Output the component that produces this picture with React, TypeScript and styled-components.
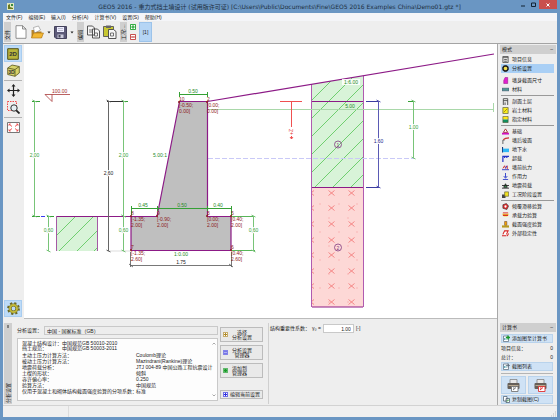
import React from "react";
import styled, { createGlobalStyle } from "styled-components";

const sans = '"Liberation Sans", "Noto Sans CJK SC", sans-serif';

const GlobalStyle = createGlobalStyle`
  * { box-sizing: border-box; }
  body { margin: 0; background: #6a96c3; font: 5px/7px ${sans}; color: #222; }
  button, input { font: inherit; color: inherit; margin: 0; padding: 0; }
  svg { display: block; flex: none; }
`;

const Window = styled.div`
  min-height: 100vh;
  display: flex;
  flex-direction: column;
  padding: 0 3px 3px;
  background: #6a96c3;
`;

const TitleBar = styled.header`
  display: flex;
  height: 13px;
  align-items: center;
  padding-left: 4px;
`;

const Title = styled.h1`
  flex: 1;
  margin: 0;
  padding-left: 28px;
  font: 400 6px/12px "DejaVu Sans", "Noto Sans CJK SC", sans-serif;
  text-align: center;
  white-space: nowrap;
  color: #1d2f42;
`;

const WindowButton = styled.button<{ $close?: boolean }>`
  display: grid;
  place-items: center;
  align-self: flex-start;
  width: ${(p) => (p.$close ? 18 : 11)}px;
  height: 9px;
  border: 0;
  background: ${(p) => (p.$close ? "#c9504e" : "transparent")};
`;

const MenuBar = styled.nav`
  display: flex;
  height: 8px;
  gap: 6px;
  padding: 0 3px;
  background: #f4f5f8;
`;

const MenuItem = styled.button`
  border: 0;
  background: none;
  line-height: 8px;
  white-space: nowrap;
`;

const Toolbar = styled.div`
  display: flex;
  align-items: center;
  gap: 3px;
  height: 22px;
  padding: 0 1px;
  background: #eee;
`;

const ToolLabel = styled.span`
  writing-mode: vertical-rl;
  text-orientation: sideways;
  transform: rotate(180deg);
  height: 20px;
  width: 7px;
  padding-top: 2px;
  line-height: 7px;
  background: #cfcfcf;
`;

const ToolButton = styled.button<{ $on?: boolean }>`
  display: grid;
  place-items: center;
  min-width: 13px;
  height: 20px;
  border: ${(p) => (p.$on ? "1px solid #9cc3ea" : "0")};
  background: ${(p) => (p.$on ? "#b5d5f5" : "none")};
`;

const Arrow = styled.button`
  width: 4px;
  height: 12px;
  border: 0;
  background: none;
  display: grid;
  place-items: center;
`;

const StageButtons = styled.div`
  display: grid;
  gap: 4px;
`;

const StageButton = styled.button`
  border: 0;
  background: none;
`;

const Body = styled.div`
  flex: 1;
  display: grid;
  grid-template-columns: minmax(0, 1fr) 60px;
  background: #eee;
  border-top: 1px solid #a4a4a4;
`;

const Work = styled.div`
  display: flex;
  flex-direction: column;
  min-width: 0;
`;

const Stage = styled.div`
  flex: 1;
  display: grid;
  grid-template-columns: 21px minmax(0, 1fr);
`;

const ViewTools = styled.div`
  display: flex;
  flex-direction: column;
  align-items: center;
  padding: 1px 2px 2px 1px;
`;

const ViewButton = styled.button<{ $on?: boolean; $last?: boolean }>`
  display: grid;
  place-items: center;
  width: 18px;
  height: 17px;
  margin-top: ${(p) => (p.$last ? "auto" : "0")};
  border: 1px solid ${(p) => (p.$on ? "#a9cdf0" : "transparent")};
  background: ${(p) => (p.$on ? "#bddbf8" : "none")};
`;

const Rule = styled.hr`
  width: 100%;
  height: 1px;
  margin: 1px 0;
  border: 0;
  background: #b4b4b4;
`;

const Canvas = styled.main`
  background: #fff;
  border-bottom: 1px solid #bbb;
  svg { width: 100%; height: auto; }
`;

const BottomPanel = styled.section`
  display: flex;
  gap: 5px;
  height: 86px;
  padding: 4px 1px 1px;
`;

const Tab = styled.div`
  display: flex;
  flex-direction: column;
  justify-content: space-between;
  align-items: center;
  width: 8px;
  padding: 2px 0 1px;
  background: #cfcfcf;
  span {
    writing-mode: vertical-rl;
    text-orientation: sideways;
    transform: rotate(180deg);
    line-height: 8px;
  }
`;

const Settings = styled.div`
  display: flex;
  flex-direction: column;
  gap: 3px;
  width: 201px;
  padding: 3px 0;
`;

const Field = styled.label`
  display: flex;
  align-items: center;
  gap: 2px;
  white-space: nowrap;
`;

const TextInput = styled.input<{ $small?: boolean }>`
  flex: ${(p) => (p.$small ? "none" : "1")};
  width: ${(p) => (p.$small ? "31px" : "auto")};
  min-width: 0;
  height: 9px;
  padding: 0 2px;
  border: 1px solid #c9c9c9;
  background: ${(p) => (p.$small ? "#fff" : "#ededed")};
  text-align: ${(p) => (p.$small ? "right" : "left")};
`;

const Report = styled.div`
  flex: 1;
  display: flex;
  justify-content: space-between;
  padding: 2px 2px 2px 4px;
  border: 1px solid #c9c9c9;
  background: #fdfdfd;
`;

const ReportText = styled.dl`
  margin: 0;
  white-space: nowrap;
`;

const ReportRow = styled.div<{ $wide?: boolean; $gap?: boolean }>`
  display: grid;
  grid-template-columns: ${(p) => (p.$wide ? 114 : 40)}px auto;
  line-height: ${(p) => (p.$wide ? 6 : 5)}px;
  height: ${(p) => (p.$wide ? 6 : 5)}px;
  margin-bottom: ${(p) => (p.$gap ? 1 : 0)}px;
  dd { margin: 0; }
`;

const ScrollEnds = styled.div`
  display: flex;
  flex-direction: column;
  justify-content: space-between;
  padding: 1px 0;
`;

const ButtonColumn = styled.div`
  display: flex;
  flex-direction: column;
  gap: 3px;
  width: 43px;
  margin-left: -3px;
  padding: 4px 0 5px;
`;

const PushButton = styled.button<{ $single?: boolean }>`
  display: flex;
  align-items: center;
  gap: ${(p) => (p.$single ? 2 : 4)}px;
  height: ${(p) => (p.$single ? 9 : 15)}px;
  margin-top: ${(p) => (p.$single ? "auto" : "0")};
  padding: 0 2px;
  border: 1px solid #bcbcbc;
  background: #e9e9e9;
  line-height: 5px;
  white-space: pre;
`;

const Factor = styled.div`
  padding: 1px;
  border-left: 1px solid #cfcfcf;
`;

const Side = styled.aside`
  display: flex;
  flex-direction: column;
  justify-content: space-between;
  padding: 1px 1px 1px 2px;
  border-left: 1px solid #a8a8a8;
`;

const SideHeader = styled.h2`
  display: flex;
  justify-content: space-between;
  align-items: center;
  height: 9px;
  margin: 0;
  padding: 0 3px 0 2px;
  background: #cfcfcf;
  font: inherit;
`;

const ModeList = styled.div`
  display: flex;
  flex-direction: column;
  padding: 1px 2px 0 1px;
`;

const ModeButton = styled.button<{ $on?: boolean }>`
  display: flex;
  align-items: center;
  gap: 3px;
  height: 9px;
  padding: 0 1px;
  border: 0;
  background: ${(p) => (p.$on ? "#a9cff5" : "none")};
  white-space: nowrap;
`;

const Separator = styled(Rule)<{ $clear?: boolean }>`
  background: ${(p) => (p.$clear ? "transparent" : "#999")};
`;

const Output = styled.div`
  display: grid;
  gap: 1px;
  padding: 2px 3px 0 1px;
`;

const BlueButton = styled.button<{ $tall?: boolean }>`
  display: flex;
  align-items: center;
  justify-content: ${(p) => (p.$tall ? "center" : "flex-start")};
  gap: 2px;
  height: ${(p) => (p.$tall ? 18 : 9)}px;
  padding: 0 1px;
  border: 1px solid #b9d3ec;
  background: #cfe2f5;
  white-space: nowrap;
`;

const CountRow = styled.div`
  display: flex;
  justify-content: space-between;
  height: 8px;
  line-height: 8px;
`;

const PrintRow = styled.div`
  display: grid;
  grid-template-columns: 1fr 1fr;
  gap: 2px;
`;

const StatusBar = styled.footer`
  display: flex;
  justify-content: space-between;
  align-items: flex-end;
  height: 12px;
  border-top: 1px solid #d2d2d2;
  background: #f0f0f0;
`;

const StatusCell = styled.div`
  width: 66px;
  height: 100%;
  border-right: 1px solid #dcdcdc;
`;

/* ---------- icons ---------- */

const modeShapes: Record<string, React.ReactNode> = {
  doc: <><path d="M1 .5h6v7H1z" fill="#ddd" stroke="#555" /><path d="M1 1.5h6M2.5 4h3M2.5 6h3" stroke="#555" /></>,
  gear: <><circle cx="4" cy="4" r="2.6" fill="none" stroke="#222" strokeWidth="2" /><circle cx="4" cy="4" r="3.4" fill="none" stroke="#222" strokeDasharray="1.4 1.2" /><circle cx="4" cy="4" r="2" fill="#f4e04a" /></>,
  wall: <path d="M3.5 .5h3v7H2V4z" fill="#e020d0" stroke="#901080" strokeWidth=".6" />,
  mat: <path d="M0 2.5h8v3H0z" fill="#4f9a93" stroke="#346" strokeWidth=".6" />,
  profile: <path d="M1.5 8V.8h5V8M1.5 3h5M3.5 5v3" fill="none" stroke="#444" />,
  soil: <><path d="M1 .5h6v7H1z" fill="#f7ee20" stroke="#775" /><path d="M2 6l4-4" stroke="#a80" /></>,
  assign: <><path d="M1 .5h6V4H1z" fill="#ffe818" /><path d="M1 4h6v3.5H1z" fill="#109060" /><path d="M1 .5h6v7H1z" fill="none" stroke="#553" strokeWidth=".7" /></>,
  base: <><path d="M1.5 5L4 1l2.5 4z" fill="#fff" stroke="#922" /><path d="M0 5.5h8v2H0z" fill="#d010c0" /></>,
  terrain: <><path d="M1 8V3.5h2" stroke="#555" fill="none" /><path d="M1.5 3Q3.5 1 8 1" stroke="#d03030" strokeWidth="1.5" fill="none" /></>,
  water: <><path d="M.5 1v6.5" stroke="#123a80" strokeWidth="1.5" /><path d="M1 3h7v4H1z" fill="#2fb8f5" /></>,
  load: <path d="M1 8V1.5h7M3 1.5v2M5.5 1.5v2" stroke="#2433c8" strokeWidth="1.4" fill="none" />,
  front: <><path d="M0 6.5h8" stroke="#2433c8" /><path d="M1 5l2-3 1 3M6 2v4" stroke="#c22" fill="none" /><path d="M4 5l1.5-3" stroke="#22c" /></>,
  force: <path d="M4 0v5M2 3.5L4 6l2-2.5M1 7.5h6" stroke="#2433c8" fill="none" />,
  quake: <><path d="M0 7h8M2 6l2-4 2 4z" stroke="#222" fill="#3a5" /><path d="M0 4h8" stroke="#222" /></>,
  stages: <><path d="M0 4h4v4H0z" fill="#444" /><path d="M3 1h4.5v5H3z" fill="#f0e020" stroke="#553" strokeWidth=".7" /></>,
  slip: <><path d="M1 2l4-1.5 2.5 3-2 4L1 6z" fill="#e02828" stroke="#333" strokeWidth=".7" /><circle cx="4" cy="4" r="1.3" fill="#fff" /></>,
  bearing: <><path d="M0 2h8L6 5H2z" fill="#f2e430" /><path d="M1 3h6v1.5H1z" fill="#d82222" /><path d="M1 1h6" stroke="#d82222" /></>,
  section: <><path d="M3 .5h2.5V5H3z" fill="#fa0" stroke="#533" strokeWidth=".6" /><path d="M0 5h8v2.5H0z" fill="#b89a20" /></>,
  stability: <path d="M0 6.5h5M1 5L3 1h4L5 5M6 7l1.5-3" stroke="#d82222" strokeWidth="1.2" fill="#fff" />,
};

const ModeIcon = ({ name }: { name: string }) => (
  <svg width="7" height="7" viewBox="0 0 8 8" aria-hidden>{modeShapes[name]}</svg>
);

const Square = ({ color, mark, size = 5 }: { color: string; mark: string; size?: number }) => (
  <svg width={size} height={size} viewBox="0 0 10 10" aria-hidden>
    <path d="M.8.8h8.4v8.4H.8z" fill="#fff" stroke={color} strokeWidth="1.5" />
    <path d={mark} stroke={color} strokeWidth="2" fill="none" />
  </svg>
);

const PLUS = "M5 2v6M2 5h6";
const LINES = "M2 3.5h6M2 6.5h6";
const DISC = "M3 3h4v4H3zM4 5h2";

const Dropper = () => (
  <svg width="4" height="3" viewBox="0 0 4 3" aria-hidden><path d="M.5.5h3L2 2.5z" fill="#222" /></svg>
);

const Printer = ({ accent }: { accent: string }) => (
  <svg width="13" height="13" viewBox="0 0 13 13" aria-hidden>
    <path d="M3 .5h7V5H3z" fill="#e8e8e8" stroke="#777" strokeWidth=".7" />
    <rect x=".5" y="4" width="12" height="6" rx="1" fill="#665f58" />
    <path d="M1.5 6.5h10" stroke="#b9a98f" />
    <path d="M4.5 7.5H11v5H4.5z" fill="#fff" stroke={accent} strokeWidth=".9" />
    <path d="M6 11l3-2.5M6 9h1.5" stroke={accent} />
  </svg>
);

const ChartAdd = ({ green }: { green?: boolean }) => (
  <svg width="7" height="7" viewBox="0 0 7 7" aria-hidden>
    <path d="M.5 1h5v5.5h-5z" fill="#fff" stroke="#567" strokeWidth=".7" />
    <path d="M1.5 5V3M3 5V2.5" stroke="#49a" strokeWidth=".8" />
    <path d="M5 .5v4M3 2.5h4" stroke={green ? "#189a28" : "#567"} strokeWidth={green ? 1.3 : 0.7} />
  </svg>
);

const CopyPages = () => (
  <svg width="7" height="7" viewBox="0 0 7 7" aria-hidden>
    <path d="M.5.5H4V5H.5zM3 2.5h3.5v4H3z" fill="#fff" stroke="#456" strokeWidth=".7" />
    <path d="M4 5.5l2-2" stroke="#189a28" />
  </svg>
);

/* ---------- drawing ---------- */

const GREEN = "#35a035";
const PURPLE = "#8c1a86";
const DARKRED = "#8e1c1c";

type DimProps = { x: number; from: number; to: number; label: string; at: number; color: string; line?: string };

const VDim = ({ x, from, to, label, at, color, line }: DimProps) => (
  <g>
    <path d={`M${x} ${from}V${to}M${x - 2} ${from - 1}l4 2M${x - 2} ${to - 1}l4 2`} stroke={line || color} />
    <text x={x} y={at + 2} fill={color} textAnchor="middle" className="halo">{label}</text>
  </g>
);

const PointLabel = ({ x, y, n, a, b }: { x: number; y: number; n: string; a: string; b: string }) => (
  <g fill={DARKRED}>
    <circle cx={x} cy={y} r="1" />
    <text x={x} y={y - 1}>{n}</text>
    <text x={x} y={y + 5}>{a}</text>
    <text x={x} y={y + 11}>{b}</text>
  </g>
);

const hatch = (sums: number[]) => sums.map((s) => `M${s - 320} 320L${s - 60} 60`).join("");

const crossRows = [193, 208, 224, 240, 255, 271, 286, 302];
const dashRows = [204, 232, 260, 288];

const Drawing = () => (
  <svg viewBox="24 44 473 274" role="img" aria-label="重力式挡土墙截面" fontFamily={sans} fontSize="5" fill="none">
    <style>{".halo{paint-order:stroke;stroke:#fff;stroke-width:2px}"}</style>
    <defs>
      <clipPath id="clipLeft"><path d="M57 216h41v35H57z" /></clipPath>
      <clipPath id="clipTop"><path d="M312 84L363 76V187H312z" /></clipPath>
      <clipPath id="clipLow"><path d="M312 188h51v119h-51z" /></clipPath>
    </defs>

    <path d="M57 216h41v35H57z" fill="#d8f3d8" />
    <path d={hatch([292, 310, 328, 345])} stroke="#6fce6f" clipPath="url(#clipLeft)" />
    <path d="M56.5 216v35M97.5 216v35" stroke="#a55aa5" />

    <path d="M312 84L363 76V187H312z" fill="#d8f3d8" />
    <path d={hatch([394, 412, 430, 448, 466, 484, 502, 520, 538])} stroke="#6fce6f" clipPath="url(#clipTop)" />
    <path d="M312 188h51v119h-51z" fill="#fdd8d6" />
    <g clipPath="url(#clipLow)">
      {crossRows.map((y) => [311, 331.5, 351.5].map((x) => (
        <path key={`${x}-${y}`} d={`M${x - 3} ${y - 2.5}l6 5M${x + 3} ${y - 2.5}l-6 5`} stroke="#f27474" strokeWidth=".8" />
      )))}
      {dashRows.map((y) => (
        <path key={y} d={`M319 ${y}h2M338 ${y}h2M356 ${y}h2M328 ${y + 14}h2M347 ${y + 14}h2`} stroke="#f7aaaa" strokeWidth=".7" />
      ))}
    </g>
    <path d="M311.5 84V307M363.5 76V307" stroke="#b05ab0" />
    <path d="M312 101.5h51M312 187.5h51M312 307h51" stroke={PURPLE} />

    <path d="M179.5 101.5h28V216H231v34.5H131V216h26z" fill="#bfbfbf" />
    <path d="M207 109.5H493M493.5 103v9" stroke="#a9d8a9" />
    <path d="M208 158.5H414" stroke="#c9c9f7" strokeDasharray="5 2" />
    <path d="M57 216.5h74" stroke={PURPLE} />
    <path d="M179.5 101.5h28V216.5H231V250.5H131V216.5h26z" stroke={PURPLE} strokeWidth="1.2" />
    <path d="M207.5 101.5L494 54" stroke={PURPLE} strokeWidth="1.2" />

    <path d="M45 94.5h25M45 94.5l7 7v-7" stroke="#a83a3a" strokeWidth=".8" />
    <text x="52" y="93" fill="#a02828">100.00</text>

    <path d="M32 101.5h8M32 216.5h8M47 216.5h7M120 101.5h8" stroke={GREEN} />
    <path d="M41 216.5h4" stroke="#3b3bf0" />
    <path d="M107 101.5h16" stroke="#333" />
    <path d="M107 251h24" stroke="#ddd" />
    <VDim x={34.5} from={101} to={216} label="2,00" at={155} color={GREEN} line="#78c478" />
    <VDim x={48.5} from={216} to={251} label="0,60" at={230} color={GREEN} line="#78c478" />
    <VDim x={108.5} from={101} to={251} label="2,60" at={173} color="#222" line="#666" />
    <VDim x={123.5} from={101} to={216} label="2,00" at={155} color={GREEN} line="#78c478" />
    <VDim x={123.5} from={216} to={251} label="0,60" at={230} color={GREEN} line="#78c478" />
    <path d="M231 216.5h24M231 250.5h24" stroke="#58b458" />
    <VDim x={253.5} from={216} to={251} label="0,60" at={230} color={GREEN} line="#78c478" />

    <path d="M179.5 94.5h28M179.5 92v5M207.5 92v5M131 208.5h100M131.5 206v9M157.5 206v5M207.5 206v5M231.5 206v10" stroke={GREEN} />
    <g fill="#258a25" textAnchor="middle">
      <text x="193" y="93">0.50</text>
      <text x="143" y="207">0.45</text>
      <text x="182" y="207">0.50</text>
      <text x="218" y="207">0.40</text>
      <text x="160" y="157" className="halo">5.00:1</text>
      <text x="181" y="256">1:0.00</text>
      <text x="350" y="108">5.00</text>
    </g>
    <path d="M342 79h18v6H342z" fill="#fff" opacity=".85" />
    <text x="351" y="84" textAnchor="middle" fill="#258a25">1:6.00</text>

    <path d="M131 265.5h100M130.5 252v15M231.5 252v15M129 264l4 3M229 264l4 3" stroke="#555" strokeWidth=".8" />
    <text x="181" y="264" textAnchor="middle" fill="#222">1.75</text>

    <PointLabel x={179} y={102} n="10" a="[-0.50;" b="0.00]" />
    <PointLabel x={207} y={102} n="2" a="[0.00;" b="0.00]" />
    <PointLabel x={131} y={216} n="8" a="[-1.35;" b="2.00]" />
    <PointLabel x={157} y={216} n="9" a="[-0.90;" b="2.00]" />
    <PointLabel x={207} y={216} n="3" a="[0.00;" b="2.00]" />
    <PointLabel x={231} y={216} n="5" a="[0.40;" b="2.00]" />
    <PointLabel x={131} y={250} n="7" a="[-1.35;" b="2.60]" />
    <PointLabel x={231} y={250} n="6" a="[0.40;" b="2.60]" />

    <path d="M280 101.5h22M291.5 101.5V127M291.5 136v3M290 137l1.5 2 1.5-2" stroke="#f05050" />
    <text transform="translate(293 135) rotate(-90)" fill="#e33030">+Z</text>

    <path d="M366 101.5h14M366 187.5h14" stroke="#3c3ca0" />
    <VDim x={378.5} from={101} to={187} label="1.60" at={141} color="#20208a" line="#5a5ab4" />
    <path d="M408 101.5h6" stroke={GREEN} />
    <VDim x={413.5} from={101} to={158} label="1.00" at={127} color={GREEN} line="#78c478" />

    {[["1", 144.5], ["2", 247.5]].map(([n, y]) => (
      <g key={n}>
        <circle cx="338" cy={y} r="3.5" stroke="#803a80" strokeWidth=".8" />
        <text x="338" y={Number(y) + 2} textAnchor="middle" fill="#803a80">{n}</text>
      </g>
    ))}
  </svg>
);

/* ---------- data ---------- */

const menus = ["文件(F)", "编辑(E)", "输入(I)", "分析(A)", "计算书(V)", "设置(S)", "帮助(H)"];

const modes: { icon: string; text: string; sep?: "line" | "gap" }[] = [
  { icon: "doc", text: "项目信息" },
  { icon: "gear", text: "分析设置", sep: "gap" },
  { icon: "wall", text: "墙身截面尺寸" },
  { icon: "mat", text: "材料", sep: "line" },
  { icon: "profile", text: "剖面土层" },
  { icon: "soil", text: "岩土材料" },
  { icon: "assign", text: "指定材料", sep: "line" },
  { icon: "base", text: "基础" },
  { icon: "terrain", text: "墙后坡面" },
  { icon: "water", text: "地下水" },
  { icon: "load", text: "超载" },
  { icon: "front", text: "墙前抗力" },
  { icon: "force", text: "作用力" },
  { icon: "quake", text: "地震荷载" },
  { icon: "stages", text: "工况阶段设置", sep: "line" },
  { icon: "slip", text: "倾覆滑移验算" },
  { icon: "bearing", text: "承载力验算" },
  { icon: "section", text: "截面强度验算" },
  { icon: "stability", text: "外部稳定性" },
];

const report: [string, string][] = [
  ["混凝土结构设计：", "中国规范GB 50010-2010"],
  ["挡土规范：", "中国规范GB 50003-2011"],
  ["主动土压力计算方法：", "Coulomb理论"],
  ["被动土压力计算方法：", "Mazindrani(Rankine)理论"],
  ["地震荷载分析：", "JTJ 004-89 中国公路工程抗震设计"],
  ["土楔的形状：", "倾斜"],
  ["容许偏心率：", "0.250"],
  ["验算方法：", "中国规范"],
  ["仅用于混凝土和砌体结构截面强度验算的分项系数：", "标准"],
];

export default function App() {
  return (
    <Window>
      <GlobalStyle />
      <TitleBar>
        <svg width="7" height="7" viewBox="0 0 7 7" aria-hidden>
          <path d="M0 0h7v7H0z" fill="#dfe7c0" /><path d="M1 6V2l2-1v3l3 1v1z" fill="#6c7a20" /><path d="M4 1h2v2H4z" fill="#3a8a40" />
        </svg>
        <Title>GEO5 2016 - 重力式挡土墙设计 (试用版许可证) [C:\Users\Public\Documents\Fine\GEO5 2016 Examples China\Demo01.gtz *]</Title>
        <WindowButton aria-label="最小化"><svg width="4" height="5"><path d="M0 4h4" stroke="#123" /></svg></WindowButton>
        <WindowButton aria-label="最大化"><svg width="5" height="5"><path d="M.5 1h4v3.5h-4z" fill="none" stroke="#123" /></svg></WindowButton>
        <WindowButton $close aria-label="关闭"><svg width="4" height="4"><path d="M.5.5l3 3M3.5.5l-3 3" stroke="#fff" /></svg></WindowButton>
      </TitleBar>

      <MenuBar>{menus.map((m) => <MenuItem key={m}>{m}</MenuItem>)}</MenuBar>

      <Toolbar>
        <ToolLabel>文件</ToolLabel>
        <ToolButton aria-label="新建">
          <svg width="12" height="14" viewBox="0 0 12 14"><path d="M1 .7h6.5L11 4v9.3H1zM7.5.7V4H11" fill="#fff" stroke="#777" strokeWidth=".8" /></svg>
        </ToolButton>
        <ToolButton aria-label="打开">
          <svg width="14" height="14" viewBox="0 0 13 14">
            <path d="M1 5h4l1 1.5h5V13H1z" fill="#b8862a" /><path d="M3 2.5L8 1l2 4-6 3z" fill="#fff" stroke="#888" strokeWidth=".6" /><path d="M3 8h10l-2 5H1z" fill="#f2b733" stroke="#a87010" strokeWidth=".6" />
          </svg>
        </ToolButton>
        <Arrow aria-label="最近文件"><Dropper /></Arrow>
        <ToolButton aria-label="保存">
          <svg width="13" height="13" viewBox="0 0 13 13">
            <path d="M.5.5h12v12H2L.5 11z" fill="#5c5a78" stroke="#44425c" /><path d="M3 1h7v5H3z" fill="#eef" /><path d="M4 2.5h5M4 4.5h5" stroke="#99a" strokeWidth=".6" /><path d="M3.5 8.5h6V12h-6z" fill="#ccd" /><path d="M4.5 9h2v2.5h-2z" fill="#445" />
          </svg>
        </ToolButton>
        <Arrow aria-label="保存选项"><Dropper /></Arrow>
        <ToolLabel>编辑</ToolLabel>
        <ToolButton aria-label="复制">
          <svg width="13" height="14" viewBox="0 0 13 14">
            <path d="M.5 1h5l2 2v7h-7zM5.5 4h5l2 2v7h-7z" fill="#f6f6f6" stroke="#444" strokeWidth=".9" /><path d="M2 5h3M2 7h3M7.5 8h3v3h-3z" stroke="#555" strokeWidth=".8" fill="none" />
          </svg>
        </ToolButton>
        <ToolButton aria-label="粘贴">
          <svg width="14" height="14" viewBox="0 0 14 14">
            <path d="M.5 1.5h10v10H.5z" fill="#c8c832" stroke="#555" strokeWidth=".9" /><path d="M3 .5h5V3H3z" fill="#666" /><path d="M5.5 4.5h5l2.5 2v7H5.5z" fill="#f6f6f6" stroke="#444" strokeWidth=".9" /><path d="M7.5 8h3v3h-3z" stroke="#555" strokeWidth=".8" fill="none" />
          </svg>
        </ToolButton>
        <ToolLabel>工况:...</ToolLabel>
        <StageButtons>
          <StageButton aria-label="添加工况"><Square size={6} color="#1aa02a" mark={PLUS} /></StageButton>
          <StageButton aria-label="删除工况"><Square size={6} color="#c03838" mark="M2 5h6" /></StageButton>
        </StageButtons>
        <ToolButton $on>[1]</ToolButton>
      </Toolbar>

      <Body>
        <Work>
          <Stage>
            <ViewTools>
              <ViewButton $on aria-label="2D">
                <svg width="12" height="12" viewBox="0 0 12 12"><path d="M.7.7h10.6v10.6H.7z" fill="#b9b53c" stroke="#55531a" /><text x="6" y="8" fontSize="6" fontWeight="700" textAnchor="middle" fill="#333">2D</text></svg>
              </ViewButton>
              <ViewButton aria-label="3D">
                <svg width="13" height="13" viewBox="0 0 13 13"><path d="M.7 4L5 1l7.3 1.5V9L8 12.3.7 10.5z" fill="#d7d36a" stroke="#55531a" strokeWidth=".8" /><path d="M.7 4L8 5.5l4.3-3M8 5.5v6.8" fill="none" stroke="#55531a" strokeWidth=".8" /><text x="4.5" y="9.5" fontSize="5" fontWeight="700" textAnchor="middle" fill="#333">3D</text></svg>
              </ViewButton>
              <Rule />
              <ViewButton aria-label="平移">
                <svg width="13" height="13" viewBox="0 0 13 13"><path d="M6.5 1v11M1 6.5h11" stroke="#222" strokeWidth="1.2" /><path d="M6.5 0l2 2.5h-4zM6.5 13l2-2.5h-4zM0 6.5l2.5-2v4zM13 6.5l-2.5-2v4z" fill="#222" /></svg>
              </ViewButton>
              <ViewButton aria-label="窗口缩放">
                <svg width="13" height="13" viewBox="0 0 13 13"><path d="M.5.5h9v9h-9z" fill="none" stroke="#f04848" strokeDasharray="1.5 1" /><circle cx="7" cy="7" r="3.2" fill="#e6eef2" stroke="#333" /><path d="M9.3 9.3l3.2 3.2" stroke="#222" strokeWidth="1.8" /></svg>
              </ViewButton>
              <Rule />
              <ViewButton aria-label="全部显示">
                <svg width="13" height="11" viewBox="0 0 13 11"><path d="M.5.5h12v10H.5z" fill="#fff" stroke="#777" /><path d="M2 2l3 2.5M11 2L8 4.5M2 9l3-2.5M11 9L8 6.5" stroke="#ee4040" strokeWidth=".9" /><path d="M2 4V2h2M9 2h2v2M2 7v2h2M9 9h2V7" fill="none" stroke="#ee4040" strokeWidth=".6" /></svg>
              </ViewButton>
              <ViewButton $on $last aria-label="绘图设置">
                <svg width="13" height="13" viewBox="0 0 13 13"><circle cx="6.5" cy="6.5" r="5.2" fill="none" stroke="#6b6825" strokeWidth="2.4" strokeDasharray="2.1 2" /><circle cx="6.5" cy="6.5" r="3.4" fill="none" stroke="#6b6825" strokeWidth="3" /><circle cx="6.5" cy="6.5" r="3.5" fill="none" stroke="#c0b83a" strokeWidth="2" /></svg>
              </ViewButton>
            </ViewTools>
            <Canvas><Drawing /></Canvas>
          </Stage>

          <BottomPanel>
            <Tab>
              <svg width="2" height="4" aria-hidden><path d="M1 0v3" stroke="#333" /></svg>
              <span>分析设置</span>
            </Tab>
            <Settings>
              <Field>分析设置：<TextInput readOnly value="中国 - 国家标准（GB）" /></Field>
              <Report>
                <ReportText>
                  {report.map(([k, v], i) => (
                    <ReportRow key={k} $wide={i > 1} $gap={i === 1}><dt>{k}</dt><dd>{v}</dd></ReportRow>
                  ))}
                </ReportText>
                <ScrollEnds>
                  <svg width="4" height="3" aria-hidden><path d="M.5 2.5L2 1l1.5 1.5" fill="none" stroke="#aaa" /></svg>
                  <svg width="4" height="3" aria-hidden><path d="M.5.5L2 2 3.5.5" fill="none" stroke="#aaa" /></svg>
                </ScrollEnds>
              </Report>
            </Settings>
            <ButtonColumn>
              <PushButton><Square color="#b08a28" mark={PLUS} /><span>{"选择\n分析设置"}</span></PushButton>
              <PushButton><Square color="#4b4be0" mark={LINES} /><span>{"分析设置\n管理器"}</span></PushButton>
              <PushButton><Square color="#189a28" mark={DISC} /><span>{"添加到\n管理器"}</span></PushButton>
              <PushButton $single><Square color="#2b2be0" mark={PLUS} /><span>编辑当前设置</span></PushButton>
            </ButtonColumn>
            <Factor>
              <Field>结构重要性系数：<span>γ₀ =</span><TextInput $small defaultValue="1.00" /> [-]</Field>
            </Factor>
          </BottomPanel>
        </Work>

        <Side>
          <div>
            <SideHeader>模式<span>–</span></SideHeader>
            <ModeList>
              {modes.map((m, i) => (
                <React.Fragment key={m.text}>
                  <ModeButton $on={i === 1}><ModeIcon name={m.icon} />{m.text}</ModeButton>
                  {m.sep && <Separator $clear={m.sep === "gap"} />}
                </React.Fragment>
              ))}
            </ModeList>
          </div>
          <div>
            <SideHeader>计算书<span>–</span></SideHeader>
            <Output>
              <BlueButton><ChartAdd green />添加图至计算书</BlueButton>
              <CountRow><span>项目信息：</span><span>0</span></CountRow>
              <CountRow><span>总计：</span><span>0</span></CountRow>
              <BlueButton><ChartAdd />截图列表</BlueButton>
              <Rule />
              <PrintRow>
                <BlueButton $tall aria-label="打印"><Printer accent="#777" /></BlueButton>
                <BlueButton $tall aria-label="打印截图"><Printer accent="#e03030" /></BlueButton>
              </PrintRow>
              <BlueButton><CopyPages />复制截图(C)</BlueButton>
            </Output>
          </div>
        </Side>
      </Body>

      <StatusBar>
        <StatusCell />
        <svg width="6" height="6" aria-hidden><path d="M4 1h1M4 3h1M2 3h1M4 5h1M2 5h1M0 5h1" stroke="#bbb" /></svg>
      </StatusBar>
    </Window>
  );
}
